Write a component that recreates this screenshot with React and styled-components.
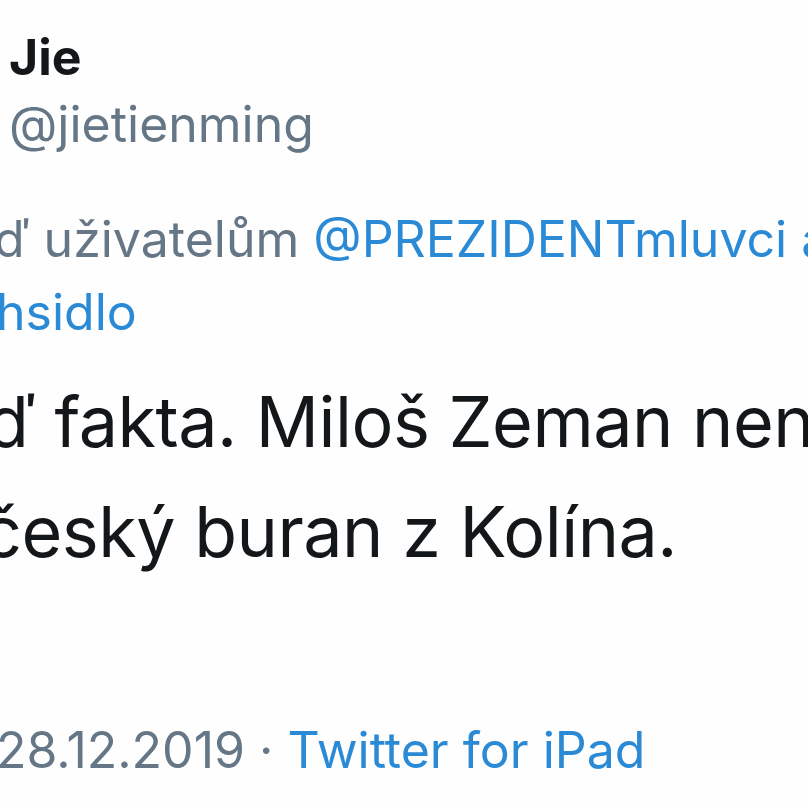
import React from "react";
import styled, { createGlobalStyle } from "styled-components";

const Global = createGlobalStyle`
  html, body { margin: 0; padding: 0; background: #ffffff; }
  body { font-family: Inter, "Noto Sans", "Liberation Sans", sans-serif; }
`;

const Page = styled.div`
  width: 808px;
  height: 808px;
  overflow: hidden;
  background: #fefefe;
  display: flex;
  flex-direction: column;
`;

const Header = styled.div`
  display: flex;
  flex-direction: column;
  padding: 27px 0 0 9px;
`;

const Name = styled.div`
  font-size: 50px;
  line-height: 60px;
  font-weight: 700;
  color: #14171a;
`;

const Handle = styled.div`
  margin-top: 7px;
  font-size: 50px;
  line-height: 60px;
  color: #657786;
`;

const Reply = styled.div`
  margin-top: 49px;
  display: flex;
  flex-direction: column;
  font-size: 50px;
  line-height: 73px;
  color: #657786;
`;

const Body = styled.div`
  margin-top: 18px;
  display: flex;
  flex-direction: column;
  font-size: 70px;
  line-height: 110px;
  letter-spacing: -0.5px;
  color: #14171a;
`;

const Line = styled.div`
  white-space: nowrap;
  margin-left: ${(p) => p.$shift}px;
`;

const Mention = styled.span`
  color: #2b8ad6;
`;

const Meta = styled.div`
  margin-top: 133px;
  margin-left: -4px;
  font-size: 50px;
  line-height: 60px;
  color: #657786;
  white-space: nowrap;
`;

const Source = styled.span`
  color: #2b8ad6;
`;

export default function App() {
  return (
    <Page>
      <Global />
      <Header>
        <Name>Jie</Name>
        <Handle>@jietienming</Handle>
      </Header>
      <Reply>
        <Line $shift={-6}>
          ď uživatelům <Mention>@PREZIDENTmluvci a</Mention>
        </Line>
        <Line $shift={-4}>
          <Mention>hsidlo</Mention>
        </Line>
      </Reply>
      <Body>
        <Line $shift={-14}>ď fakta. Miloš Zeman není</Line>
        <Line $shift={-18}>český buran z Kolína.</Line>
      </Body>
      <Meta>
        28.12.2019 · <Source>Twitter for iPad</Source>
      </Meta>
    </Page>
  );
}
